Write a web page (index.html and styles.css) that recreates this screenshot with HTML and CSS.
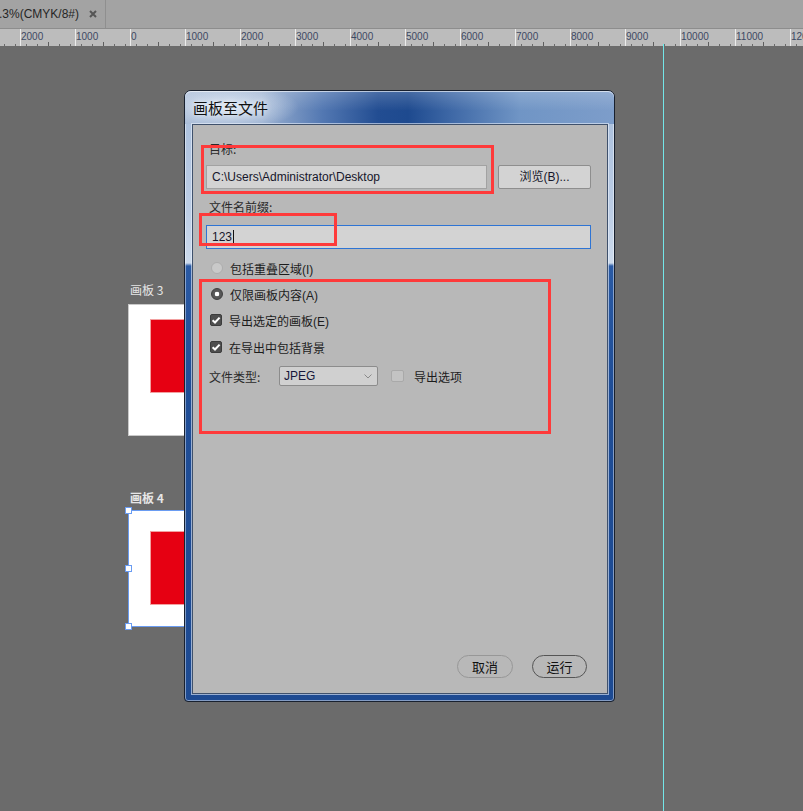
FILE: index.html
```html
<!DOCTYPE html>
<html lang="zh">
<head>
<meta charset="utf-8">
<title>画板至文件</title>
<link rel="stylesheet" href="styles.css">
</head>
<body>
<div class="app">
  <div class="tabbar">
    <div class="tab">
      <span class="tab-title">.3%(CMYK/8#)</span>
      <svg class="tab-close" width="8" height="8" viewBox="0 0 8 8"><path d="M1 1L7 7M7 1L1 7" stroke="#555" stroke-width="2"/></svg>
    </div>
  </div>
  <div class="ruler">
    <div class="cell"></div>
    <div class="cell"><span>2000</span></div>
    <div class="cell"><span>1000</span></div>
    <div class="cell"><span>0</span></div>
    <div class="cell"><span>1000</span></div>
    <div class="cell"><span>2000</span></div>
    <div class="cell"><span>3000</span></div>
    <div class="cell"><span>4000</span></div>
    <div class="cell"><span>5000</span></div>
    <div class="cell"><span>6000</span></div>
    <div class="cell"><span>7000</span></div>
    <div class="cell"><span>8000</span></div>
    <div class="cell"><span>9000</span></div>
    <div class="cell"><span>10000</span></div>
    <div class="cell"><span>11000</span></div>
    <div class="cell"><span class="cut">12000</span></div>
    <i class="ruler-mark"></i>
  </div>
  <div class="canvas">
    <div class="artboard ab3">
      <div class="ab-label">画板 3</div>
      <div class="ab-page"><div class="ab-red"></div></div>
    </div>
    <div class="artboard ab4">
      <div class="ab-label bold">画板 4</div>
      <div class="ab-page selected">
        <div class="ab-red"></div>
        <i class="handle h-tl"></i><i class="handle h-ml"></i><i class="handle h-bl"></i>
      </div>
    </div>
    <div class="guide"></div>

    <div class="dialog">
      <div class="titlebar"><span class="title">画板至文件</span></div>
      <div class="panel">
        <div class="label">目标:</div>
        <div class="row path-row">
          <div class="field path">C:\Users\Administrator\Desktop</div>
          <div class="btn browse">浏览(B)...</div>
        </div>
        <div class="label label2">文件名前缀:</div>
        <div class="field prefix focused">123<i class="caret"></i></div>

        <div class="opt first"><span class="radio disabled"></span><span>包括重叠区域(I)</span></div>
        <div class="opt"><span class="radio on"></span><span>仅限画板内容(A)</span></div>
        <div class="opt"><span class="check on"><svg width="12" height="12" viewBox="0 0 12 12"><path d="M2.6 6.2L5 8.5L9.6 3.6" fill="none" stroke="#fff" stroke-width="2"/></svg></span><span>导出选定的画板(E)</span></div>
        <div class="opt o4"><span class="check on"><svg width="12" height="12" viewBox="0 0 12 12"><path d="M2.6 6.2L5 8.5L9.6 3.6" fill="none" stroke="#fff" stroke-width="2"/></svg></span><span>在导出中包括背景</span></div>

        <div class="type-row">
          <span class="type-label">文件类型:</span>
          <div class="select"><span>JPEG</span><svg width="8" height="5" viewBox="0 0 8 5"><path d="M0.5 0.5L4 4L7.5 0.5" fill="none" stroke="#8a8a8a" stroke-width="1"/></svg></div>
          <span class="check off"></span>
          <span class="opt-text">导出选项</span>
        </div>

        <div class="footer">
          <div class="pill cancel">取消</div>
          <div class="pill run">运行</div>
        </div>
      </div>
    </div>

    <div class="mark m1"></div>
    <div class="mark m2"></div>
    <div class="mark m3"></div>
  </div>
</div>
</body>
</html>
```

FILE: styles.css
```css
html, body {
  margin: 0;
  padding: 0;
  height: 100%;
  overflow: hidden;
}
body {
  background: #6b6b6b;
  font-family: "Liberation Sans", "Noto Sans CJK SC", sans-serif;
  font-size: 12px;
  color: #1e1e1e;
}
.app {
  display: flex;
  flex-direction: column;
  height: 811px;
}

/* tab bar */
.tabbar {
  height: 28px;
  background: #a3a3a3;
  border-bottom: 1px solid #8d8d8d;
  display: flex;
}
.tab {
  width: 106px;
  border-right: 1px solid #8f8f8f;
  display: flex;
  align-items: center;
  margin-left: -1px;
}
.tab-title {
  color: #262626;
  font-size: 12px;
}
.tab-close {
  margin-left: 10px;
}

/* ruler */
.ruler {
  height: 17px;
  background: #bcbcbc;
  display: flex;
  margin-left: -35px;
  overflow: hidden;
  position: relative;
  flex: none;
}
.ruler .cell {
  flex: none;
  width: 54px;
  border-left: 1px solid #ececec;
  position: relative;
  background:
    linear-gradient(to right, transparent 27px, #5e5e5e 27px, #5e5e5e 28px, transparent 28px) bottom left / 100% 4px no-repeat,
    repeating-linear-gradient(to right, transparent 0, transparent 5px, #6a6a6a 5px, #6a6a6a 6px, transparent 6px, transparent 11px) bottom left / 100% 2px no-repeat;
}
.ruler .cell span {
  position: absolute;
  left: 0;
  top: 2px;
  font-size: 10px;
  color: #3d4963;
  font-family: "Liberation Sans", sans-serif;
}
.ruler .cell span.cut {
  width: 13px;
  overflow: hidden;
  white-space: nowrap;
}
.ruler-mark {
  position: absolute;
  left: 698px;
  bottom: 0;
  width: 1px;
  height: 2px;
  background: #5ff0f0;
}

/* canvas */
.canvas {
  flex: 1;
  position: relative;
  background: #6b6b6b;
}
.artboard {
  position: absolute;
  left: 128px;
}
.ab3 { top: 236px; }
.ab4 { top: 444px; }
.ab-label {
  color: #e6e6e6;
  font-size: 12px;
  height: 16px;
  line-height: 16px;
  padding-left: 2px;
  font-family: "Noto Sans CJK SC", "Liberation Sans", sans-serif;
}
.ab-label.bold { font-weight: bold; }
.ab-page {
  position: relative;
  width: 160px;
  background: #fff;
  border: 1px solid #c9c9c9;
}
.ab3 .ab-page { height: 130px; margin-top: 6px; }
.ab3 .ab-red { margin: 15px 0 0 22px; height: 72px; }
.ab4 .ab-page { height: 115px; margin-top: 4px; border-color: #6a9cf2; }
.ab4 .ab-red { margin: 21px 0 0 22px; height: 72px; }
.ab-red {
  background: #e60012;
  width: 120px;
  box-shadow: 0 0 0 1px #f2a0a0;
}
.handle {
  position: absolute;
  width: 5px;
  height: 5px;
  background: #fff;
  border: 1px solid #6a9cf2;
  left: -4px;
}
.h-tl { top: -4px; }
.h-ml { top: 54px; }
.h-bl { bottom: -4px; }

.guide {
  position: absolute;
  left: 663px;
  top: 0;
  bottom: 0;
  width: 1px;
  background: #73e6e8;
}

/* dialog */
.dialog {
  position: absolute;
  left: 184px;
  top: 44px;
  width: 429px;
  height: 610px;
  border: 1px solid #18202e;
  border-radius: 7px 7px 4px 4px;
  display: flex;
  flex-direction: column;
  background:
    linear-gradient(to bottom, #a7bddb 0px, #bccde5 120px, #ccdaec 172px, #2a5aa4 175px, #1f4d96 300px, #1d4a92 100%);
  box-shadow: inset 0 0 0 1px rgba(255,255,255,0.45);
  z-index: 2;
}
.titlebar {
  height: 33px;
  flex: none;
  display: flex;
  align-items: center;
  padding-left: 8px;
  border-radius: 6px 6px 0 0;
  background:
    radial-gradient(ellipse 70px 22px at 44px 16px, rgba(230,238,248,0.85), rgba(230,238,248,0) 100%),
    linear-gradient(to bottom, rgba(255,255,255,0.18), rgba(255,255,255,0) 60%),
    linear-gradient(to right, #a9bcd7 0%, #9ab0d0 18%, #5378b2 32%, #224d92 45%, #1e4a8f 52%, #3e68a6 62%, #7095c5 78%, #7d9dca 100%);
  box-shadow: inset 0 1px 0 rgba(255,255,255,0.6);
}
.title {
  font-family: "Noto Sans CJK SC", sans-serif;
  font-size: 15px;
  color: #101010;
  text-shadow: 0 0 6px rgba(255,255,255,0.9);
  margin-top: 0;
}
.panel {
  flex: 1;
  margin: 0 6px 7px 7px;
  background: #b8b8b8;
  border: 1px solid #3f516c;
  box-shadow: 0 0 0 1px rgba(235,242,252,0.6);
  display: flex;
  flex-direction: column;
  padding: 16px 16px 15px 13px;
}
.label {
  height: 16px;
  line-height: 16px;
  padding-left: 3px;
  color: #2a2a2a;
  font-family: "Noto Sans CJK SC", sans-serif;
}
.label2 { margin-top: 10px; }
.row {
  display: flex;
  margin-top: 8px;
  gap: 11px;
}
.field {
  height: 22px;
  line-height: 22px;
  background: #d3d3d3;
  border: 1px solid #a2a2a2;
  padding-left: 5px;
  color: #16162a;
  font-size: 12px;
}
.path { width: 274px; }
.btn {
  width: 91px;
  height: 22px;
  line-height: 22px;
  text-align: center;
  background: #d3d3d3;
  border: 1px solid #8e8e8e;
  border-radius: 2px;
  color: #16162a;
}
.prefix {
  margin-top: 10px;
  border-color: #2e74d4;
  display: flex;
  align-items: center;
}
.caret {
  width: 1px;
  height: 15px;
  background: #111;
  margin-left: 1px;
}
.opt {
  height: 18px;
  display: flex;
  align-items: center;
  margin-top: 8px;
  padding-left: 4px;
  color: #1c1c1c;
}
.opt.first { margin-top: 10px; padding-left: 5px; }
.opt.o4 { margin-top: 9px; }
.radio {
  width: 12px;
  height: 12px;
  border-radius: 50%;
  box-sizing: border-box;
  margin-right: 7px;
  flex: none;
}
.radio.disabled {
  background: #c9c9c9;
  border: 1px solid #adadad;
}
.radio.on {
  background: radial-gradient(circle at 50% 50%, #fff 0, #fff 2px, #5a5a5a 2.6px, #505050 100%);
  border: 1px solid #3e3e3e;
  margin-left: 1px;
}
.check {
  width: 12px;
  height: 12px;
  border-radius: 2px;
  box-sizing: border-box;
  flex: none;
  display: flex;
  align-items: center;
  justify-content: center;
}
.opt .check { margin-right: 7px; }
.check.on {
  background: #4e4e4e;
  border: 1px solid #3c3c3c;
}
.check.on svg { flex: none; }
.check.off {
  width: 13px;
  height: 12px;
  background: #c3c3c3;
  border: 1px solid #a9a9a9;
  margin-left: 13px;
}
.type-row {
  display: flex;
  align-items: center;
  margin-top: 10px;
  height: 20px;
}
.type-label {
  width: 73px;
  padding-left: 3px;
  box-sizing: border-box;
  color: #2a2a2a;
  font-family: "Noto Sans CJK SC", sans-serif;
}
.select {
  width: 99px;
  height: 20px;
  border: 1px solid #8c8c8c;
  border-radius: 2px;
  background: #d0d0d0;
  display: flex;
  align-items: center;
  justify-content: space-between;
  padding: 0 5px 0 4px;
  box-sizing: border-box;
  color: #16163a;
}
.opt-text {
  margin-left: 10px;
  color: #1c1c1c;
}
.footer {
  margin-top: auto;
  display: flex;
  justify-content: flex-end;
  gap: 19px;
  padding-right: 4px;
}
.pill {
  height: 21px;
  line-height: 21px;
  border-radius: 12px;
  text-align: center;
  font-size: 13px;
  font-family: "Noto Sans CJK SC", sans-serif;
  color: #111;
}
.pill.cancel { width: 54px; border: 1px solid #979797; }
.pill.run { width: 53px; border: 1px solid #555; }

/* red annotation boxes */
.mark {
  position: absolute;
  border: 3px solid #fe3a3a;
  z-index: 3;
}
.m1 { left: 201px; top: 99px; width: 287px; height: 43px; }
.m2 { left: 199px; top: 167px; width: 132px; height: 27px; }
.m3 { left: 199px; top: 233px; width: 346px; height: 149px; }
```
